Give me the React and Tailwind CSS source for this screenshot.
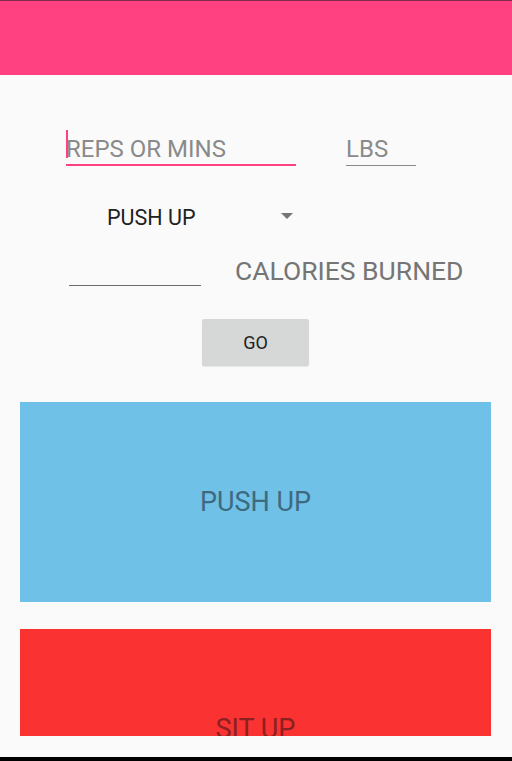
export default function App() {
  return (
    <div className="flex h-[761px] w-[512px] flex-col bg-[#fafafa] font-['Roboto',sans-serif]">
      <div className="h-[75px] shrink-0 border-t border-[#7d2a4c] bg-[#ff4081]" />

      <div className="h-[661px] shrink-0 overflow-hidden">
        <div className="mt-[60px] flex items-start">
          <div className="relative ml-[66px] w-[230px] border-b-2 border-[#ff4081] pb-[1px] text-[24px] leading-[28px] text-[#8a8a8a]">
            <span className="absolute left-0 top-[-5px] h-[28px] w-[2px] bg-[#ff4081]" />
            REPS OR MINS
          </div>
          <div className="ml-[50px] w-[70px] border-b border-[#8a8a8a] pb-[2px] text-[24px] leading-[28px] text-[#8a8a8a]">
            LBS
          </div>
        </div>

        <div className="mt-[39px] flex items-start">
          <div className="ml-[107px] w-[174px] text-[21.5px] leading-[26px] text-[#212121]">PUSH UP</div>
          <svg className="mt-[8px]" width="12" height="6" viewBox="0 0 12 6">
            <path d="M0 0h12L6 6z" fill="#757575" />
          </svg>
        </div>

        <div className="mt-[25px] flex items-start">
          <div className="ml-[69px] h-[30px] w-[132px] border-b border-[#6b6b6b]" />
          <div className="ml-[34px] text-[26.5px] leading-[30px] text-[#757575]">CALORIES BURNED</div>
        </div>

        <button className="ml-[202px] mt-[33px] flex h-[47px] w-[107px] items-center justify-center rounded-[2px] bg-[#d6d7d7] text-[18px] text-[#212121] shadow-[0_1px_1px_rgba(0,0,0,0.08)]">
          GO
        </button>

        <div className="mx-[20px] mt-[36px] flex h-[200px] w-[471px] items-center justify-center bg-[#70c1e8] text-[27px] text-[#3e6a80]">
          PUSH UP
        </div>

        <div className="mx-[20px] mt-[27px] flex h-[200px] w-[471px] items-center justify-center bg-[#fa3232] text-[27px] text-[#8a2020]">
          SIT UP
        </div>
      </div>

      <div className="h-[21px] shrink-0" />
      <div className="h-[4px] shrink-0 bg-black" />
    </div>
  )
}
